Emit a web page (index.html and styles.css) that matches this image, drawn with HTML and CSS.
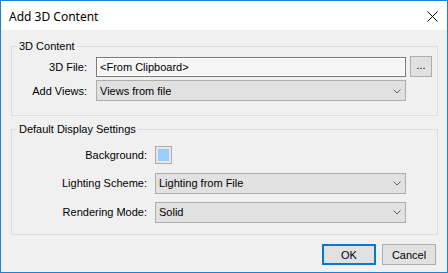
FILE: index.html
```html
<!DOCTYPE html>
<html lang="en">
<head>
    <meta charset="UTF-8">
    <title>Add 3D Content</title>
    <link rel="stylesheet" href="styles.css">
</head>
<body>
    <div class="window">
        <div class="titlebar">
            <span class="title">Add 3D Content</span>
            <svg class="close" width="11" height="11" viewBox="0 0 11 11">
                <path d="M0.5 0.5 L10.5 10.5 M10.5 0.5 L0.5 10.5" stroke="#000" stroke-width="1" fill="none"/>
            </svg>
        </div>

        <div class="dialog">
            <fieldset class="group">
                <legend>3D Content</legend>
                <div class="rows rows-content">
                    <label>3D File:</label>
                    <div class="textbox">&lt;From Clipboard&gt;</div>
                    <button class="browse">...</button>

                    <label>Add Views:</label>
                    <div class="combo">
                        <span>Views from file</span>
                        <svg width="8" height="5" viewBox="0 0 8 5"><path d="M0.5 0.5 L4 4 L7.5 0.5" stroke="#606060" fill="none"/></svg>
                    </div>
                </div>
            </fieldset>

            <fieldset class="group group-display">
                <legend>Default Display Settings</legend>
                <div class="rows rows-display">
                    <label>Background:</label>
                    <div class="swatch"><span></span></div>

                    <label>Lighting Scheme:</label>
                    <div class="combo">
                        <span>Lighting from File</span>
                        <svg width="8" height="5" viewBox="0 0 8 5"><path d="M0.5 0.5 L4 4 L7.5 0.5" stroke="#606060" fill="none"/></svg>
                    </div>

                    <label>Rendering Mode:</label>
                    <div class="combo">
                        <span>Solid</span>
                        <svg width="8" height="5" viewBox="0 0 8 5"><path d="M0.5 0.5 L4 4 L7.5 0.5" stroke="#606060" fill="none"/></svg>
                    </div>
                </div>
            </fieldset>

            <div class="actions">
                <button class="btn btn-default">OK</button>
                <button class="btn">Cancel</button>
            </div>
        </div>
    </div>
</body>
</html>
```

FILE: styles.css
```css
* {
    box-sizing: border-box;
}
body {
    margin: 0;
    font-family: "Liberation Sans", Arial, sans-serif;
    font-size: 11px;
    color: #000;
    background: #f0f0f0;
}
.window {
    width: 448px;
    height: 273px;
    border: 1px solid #1883d7;
    border-top-width: 1px;
    display: flex;
    flex-direction: column;
    background: #f0f0f0;
}
.titlebar {
    height: 29px;
    background: #fff;
    display: flex;
    align-items: center;
    justify-content: space-between;
    padding: 0 9px 0 8px;
}
.title {
    font-family: "Noto Sans", sans-serif;
    font-size: 12px;
    padding-top: 1px;
}
.close {
    margin-top: 1px;
}
.dialog {
    flex: 1;
    padding: 9px 9px 0 10px;
}
.group {
    margin: 0;
    padding: 0;
    border: 1px solid #dcdcdc;
    min-inline-size: 0;
}
.group legend {
    margin-left: 5px;
    padding: 0 2px;
    line-height: 14px;
}
.group-display {
    margin-top: 6px;
}
.rows {
    display: grid;
    align-items: center;
}
.rows label {
    text-align: right;
    padding-right: 9px;
}
.rows-content {
    grid-template-columns: 84px 310px 26px;
    grid-template-rows: 21px 21px;
    row-gap: 3px;
    padding: 3px 0 14px;
}
.rows-display {
    grid-template-columns: 143px 251px;
    grid-template-rows: 18px 21px 21px;
    row-gap: 8px;
    padding: 10px 0 12px;
}
.rows-display label {
    padding-right: 8px;
}
.rows-display .combo {
    margin-top: 1px;
}
.textbox {
    height: 20px;
    margin-top: 1px;
    border: 1px solid #7a7a7a;
    box-shadow: inset 0 0 0 1px #fff;
    background: #f5f5f5;
    padding: 0 3px;
    line-height: 18px;
}
.browse {
    width: 22px;
    height: 21px;
    margin-left: 4px;
    padding: 0 0 3px;
    border: 1px solid #adadad;
    background: #e1e1e1;
    font-family: "Liberation Sans", Arial, sans-serif;
    font-size: 11px;
    line-height: 1;
}
.combo {
    height: 21px;
    border: 1px solid #adadad;
    background: #e1e1e1;
    display: flex;
    align-items: center;
    justify-content: space-between;
    padding: 0 4px 0 3px;
}
.combo svg {
    margin-top: 1px;
}
.swatch {
    width: 17px;
    height: 18px;
    border: 1px solid #adadad;
    background: #e6e6e6;
    padding: 2px;
}
.swatch span {
    display: block;
    height: 100%;
    background: #99ccff;
}
.actions {
    display: flex;
    justify-content: flex-end;
    gap: 6px;
    margin-top: 9px;
    padding-right: 2px;
}
.btn {
    width: 54px;
    height: 21px;
    border: 1px solid #adadad;
    background: #e1e1e1;
    font-family: "Liberation Sans", Arial, sans-serif;
    font-size: 11px;
    padding: 0;
}
.btn-default {
    border: 2px solid #0078d7;
}
```
